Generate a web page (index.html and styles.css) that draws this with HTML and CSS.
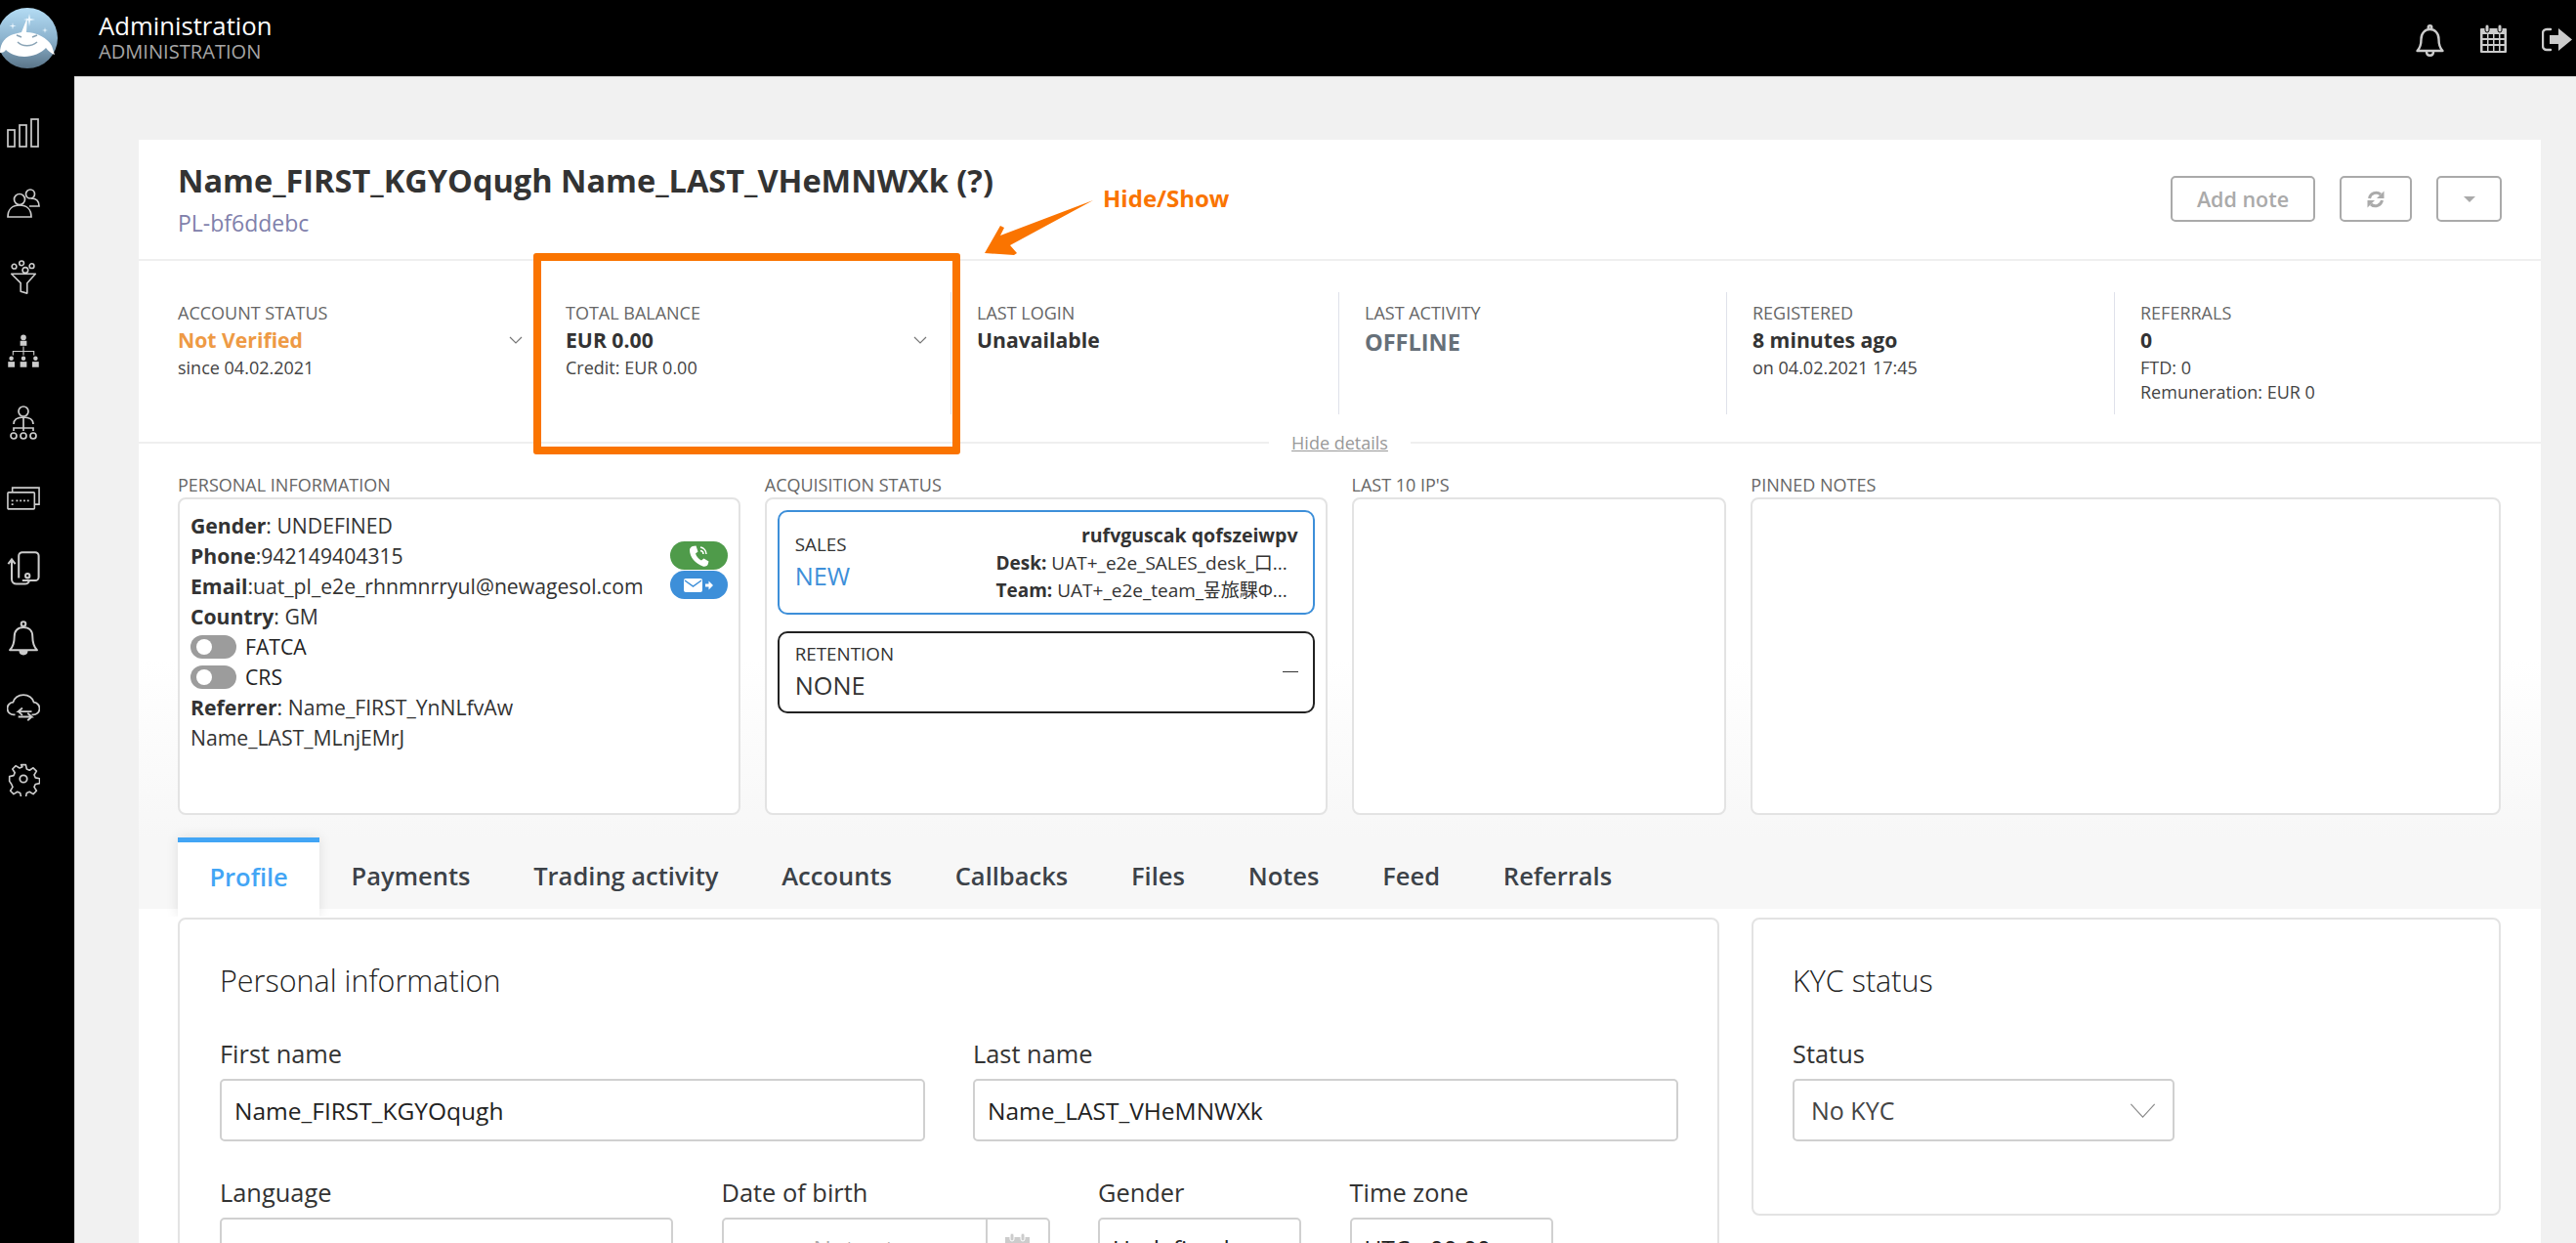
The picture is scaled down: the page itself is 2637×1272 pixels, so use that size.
FILE: index.html
```html
<!DOCTYPE html>
<html lang="en">
<head>
    <meta charset="UTF-8">
    <meta name="viewport" content="width=device-width, initial-scale=1.0">
    <title>Administration</title>
    <link rel="stylesheet" href="styles.css">
</head>
<body>
    <header class="topbar">
        <svg class="logo" viewBox="0 0 62 62">
            <defs>
                <linearGradient id="logoFill" x1="0" y1="0" x2="0" y2="1">
                    <stop offset="0" stop-color="#b4dcf4"/>
                    <stop offset="0.5" stop-color="#8db4cf"/>
                    <stop offset="1" stop-color="#5a7488"/>
                </linearGradient>
            </defs>
            <circle cx="31" cy="31" r="31" fill="url(#logoFill)"/>
            <path d="M3 46c0-10 6-17 14-19l8-2 6-15-1 15c10 0 22 6 26 14l3 9c-3-1-7-4-9-7-4 5-14 9-22 9s-15-3-19-7c-1 2-3 3-6 3z" fill="#fff"/>
            <path d="M21 35c5 5 14 5 20 0M20 28l5 2M36 30l5-2" fill="none" stroke="#8aa4b6" stroke-width="1.5"/>
            <path d="M33 6l1 5 5 1-5 1-1 6-1-6-5-1 5-1zM16 15l.6 3 3 .6-3 .6-.6 3-.6-3-3-.6 3-.6zM49 20l.5 2.500 2.500.5-2.500.5-.5 2.500-.5-2.500-2.500-.5 2.500-.5z" fill="#eef8ff"/>
        </svg>
        <div class="topbar-title">
            <div class="app-name">Administration</div>
            <div class="app-sub">ADMINISTRATION</div>
        </div>
        <div class="topbar-icons">
            <svg class="icon-bell" viewBox="0 0 29 33" fill="none" stroke="#ccc" stroke-width="2.400">
                <path d="M1.500 27c3-3 4-6 4-12 0-6 4-10 9-10s9 4 9 10c0 6 1 9 4 12z" stroke-linejoin="round"/>
                <circle cx="14.500" cy="3" r="1.800"/>
                <path d="M11 28c0 5 7 5 7 0"/>
            </svg>
            <svg class="icon-cal" viewBox="0 0 27 29">
                <path d="M1 4h25a1 1 0 0 1 1 1v23a1 1 0 0 1-1 1H1a1 1 0 0 1-1-1V5a1 1 0 0 1 1-1z" fill="#ccc"/>
                <path d="M2.500 10h4.500v4H2.500zM8.500 10h4.500v4H8.500zM14.500 10h4.500v4h-4.500zM20.500 10h4v4h-4zM2.500 16h4.500v4H2.500zM8.500 16h4.500v4H8.500zM14.500 16h4.500v4h-4.500zM20.500 16h4v4h-4zM2.500 22h4.500v5H2.500zM8.500 22h4.500v5H8.500zM14.500 22h4.500v5h-4.500zM20.500 22h4v5h-4z" fill="#000"/>
                <rect x="5" y="0" width="4" height="8" rx="2" fill="#ccc" stroke="#000"/>
                <rect x="18" y="0" width="4" height="8" rx="2" fill="#ccc" stroke="#000"/>
            </svg>
            <svg class="icon-logout" viewBox="0 0 31 25">
                <path d="M9 2H5a4 4 0 0 0-4 4v13a4 4 0 0 0 4 4h4" fill="none" stroke="#ccc" stroke-width="2.400" stroke-linecap="round"/>
                <path d="M8 8h9V1l14 11.500L17 24v-7H8z" fill="#ccc"/>
            </svg>
        </div>
    </header>

    <div class="main">
        <nav class="sidebar">
            <div class="nav-item">
                <svg viewBox="0 0 34 30"><rect x="1" y="12" width="7" height="17"/><rect x="13" y="7" width="7" height="22"/><rect x="25" y="1" width="7" height="28"/></svg>
            </div>
            <div class="nav-item">
                <svg viewBox="0 0 34 30"><circle cx="13" cy="11" r="5.500"/><path d="M1 29c0-8 5-12 12-12s12 4 12 12z"/><circle cx="24" cy="5.500" r="4.500"/><path d="M23 18h10c0-5-3-8-8-8"/></svg>
            </div>
            <div class="nav-item">
                <svg viewBox="0 0 28 38"><circle cx="4" cy="7" r="2.500"/><circle cx="12" cy="3.500" r="2.500"/><circle cx="23" cy="6.500" r="2.500"/><circle cx="16" cy="11" r="3"/><path d="M1 15h26L18 25v11l-7-2V25z" stroke-linejoin="round"/></svg>
            </div>
            <div class="nav-item">
                <svg viewBox="0 0 30 32" class="solid"><circle cx="15" cy="3" r="2.500"/><rect x="12" y="6" width="6" height="4.500"/><path d="M14.500 11h1v4h9.500v4h-1v-3h-8.500v3h-1v-3H6v3H5v-4h9.500z"/><circle cx="4" cy="22" r="2"/><rect x="1" y="25" width="6" height="5"/><circle cx="15" cy="22" r="2"/><rect x="12" y="25" width="6" height="5"/><circle cx="26" cy="22" r="2"/><rect x="23" y="25" width="6" height="5"/></svg>
            </div>
            <div class="nav-item">
                <svg viewBox="0 0 28 36"><circle cx="14" cy="6" r="5"/><path d="M4 19c0-5 4-7 10-7s10 2 10 7M14 12v14M4 26v-3h20v3"/><circle cx="4" cy="31" r="3"/><circle cx="14" cy="31" r="3"/><circle cx="24" cy="31" r="3"/></svg>
            </div>
            <div class="nav-item">
                <svg viewBox="0 0 36 25"><path d="M6 6V1h29v18h-5"/><rect x="1" y="6" width="29" height="18" rx="1"/><path d="M5 15h2M10 15h2M14 15h2M18 15h2M22 15h2M5 19h2"/></svg>
            </div>
            <div class="nav-item">
                <svg viewBox="0 0 28 30"><path d="M10 23V4a3 3 0 0 1 3-3h11a3 3 0 0 1 3 3v18a3 3 0 0 1-3 3H13"/><circle cx="17.500" cy="21" r="1.800"/><path d="M1 11l3-4 3 4M4 7v17a4 4 0 0 0 4 4h7a4 4 0 0 0 4-3"/></svg>
            </div>
            <div class="nav-item">
                <svg viewBox="0 0 26 31"><path d="M1 26c3-3 4-6 4-12 0-5 3-8 8-8s8 3 8 8c0 6 1 9 4 12z" stroke-linejoin="round"/><circle cx="13" cy="3" r="2"/><path d="M10 27c0 3.500 6 3.500 6 0z" class="fill"/></svg>
            </div>
            <div class="nav-item">
                <svg viewBox="0 0 32 28"><path d="M8 20H7a6 6 0 0 1-1-12C7 4 11 1 16 1s9 3 10 7a6 6 0 0 1-1 12h-1"/><path d="M24 17H11l4-3.500M11 17l4 3.500M11 22h13l-4-3.500M24 22l-4 3.500"/></svg>
            </div>
            <div class="nav-item">
                <svg viewBox="0 0 32 32"><circle cx="16" cy="16" r="3.500"/><path d="M13.500 1h5l1 4.500 3 1.300 4-2.500 3.500 3.500-2.500 4 1.300 3 4.500 1v5l-4.500 1-1.300 3 2.500 4-3.500 3.500-4-2.500-3 1.300-1 4.500h-5l-1-4.500-3-1.300-4 2.500-3.500-3.500 2.500-4-1.300-3L1 18.500v-5l4.500-1 1.300-3-2.500-4 3.500-3.500 4 2.500 3-1.300z" transform="translate(1.600 1.600) scale(.9)" stroke-linejoin="round"/></svg>
            </div>
        </nav>

        <main class="content">
            <div class="card">
                <div class="card-head">
                    <div>
                        <h1 class="client-name">Name_FIRST_KGYOqugh Name_LAST_VHeMNWXk (?)</h1>
                        <div class="client-id">PL-bf6ddebc</div>
                    </div>
                    <div class="head-actions">
                        <button class="btn btn-note">Add note</button>
                        <button class="btn btn-refresh">
                            <svg viewBox="0 0 20 20" width="20" height="20" fill="#aaa"><path d="M3.500 9A7 7 0 0 1 15 5" fill="none" stroke="#aaa" stroke-width="3"/><path d="M18.500 1.500V9H11z"/><path d="M16.500 11A7 7 0 0 1 5 15" fill="none" stroke="#aaa" stroke-width="3"/><path d="M1.500 18.500V11H9z"/></svg>
                        </button>
                        <button class="btn btn-caret"><span class="caret"></span></button>
                    </div>
                </div>

                <div class="stats">
                    <div class="stat stat-first">
                        <div class="stat-label">ACCOUNT STATUS</div>
                        <div class="stat-value stat-row"><span class="text-orange">Not Verified</span><svg class="chev" viewBox="0 0 14 8"><path d="M1 1l6 6 6-6"/></svg></div>
                        <div class="stat-sub">since 04.02.2021</div>
                    </div>
                    <div class="stat">
                        <div class="stat-label">TOTAL BALANCE</div>
                        <div class="stat-value stat-row"><span>EUR 0.00</span><svg class="chev" viewBox="0 0 14 8"><path d="M1 1l6 6 6-6"/></svg></div>
                        <div class="stat-sub">Credit: EUR 0.00</div>
                    </div>
                    <div class="stat">
                        <div class="stat-label">LAST LOGIN</div>
                        <div class="stat-value">Unavailable</div>
                    </div>
                    <div class="stat">
                        <div class="stat-label">LAST ACTIVITY</div>
                        <div class="stat-value text-offline">OFFLINE</div>
                    </div>
                    <div class="stat">
                        <div class="stat-label">REGISTERED</div>
                        <div class="stat-value">8 minutes ago</div>
                        <div class="stat-sub">on 04.02.2021 17:45</div>
                    </div>
                    <div class="stat">
                        <div class="stat-label">REFERRALS</div>
                        <div class="stat-value">0</div>
                        <div class="stat-sub">FTD: 0</div>
                        <div class="stat-sub">Remuneration: EUR 0</div>
                    </div>
                </div>

                <div class="hide-line"><a class="hide-link">Hide details</a></div>

                <div class="details">
                    <div>
                        <div class="box-label">PERSONAL INFORMATION</div>
                        <div class="box box-personal">
                            <div class="info-line"><b>Gender</b>: UNDEFINED</div>
                            <div class="info-line"><b>Phone</b>:942149404315</div>
                            <div class="info-line"><b>Email</b>:uat_pl_e2e_rhnmnrryul@newagesol.com</div>
                            <div class="info-line"><b>Country</b>: GM</div>
                            <div class="info-line toggle-line"><span class="toggle"></span>FATCA</div>
                            <div class="info-line toggle-line"><span class="toggle"></span>CRS</div>
                            <div class="info-line"><b>Referrer</b>: Name_FIRST_YnNLfvAw Name_LAST_MLnjEMrJ</div>
                            <div class="contact-btns">
                                <span class="pill pill-green">
                                    <svg viewBox="0 0 24 24" width="24" height="24"><path d="M6 2l3.500-.5 2 6-2.500 2c1 3 3 5.500 6 7l2.500-2 5 3-1 3.500c-1 1.500-3 2-5 1.500C9 20 3 13 3 6c0-2 1.500-3.500 3-4z" fill="#fff"/><path d="M14 3a7 7 0 0 1 6 7M14 6.500a3.500 3.500 0 0 1 3 3.500" stroke="#fff" stroke-width="1.500" fill="none"/></svg>
                                </span>
                                <span class="pill pill-blue">
                                    <svg viewBox="0 0 32 18" width="32" height="18"><rect x="1" y="2" width="19" height="14" rx="2" fill="#fff"/><path d="M2 4l8.500 6L19 4" stroke="#3d8fd9" stroke-width="1.500" fill="none"/><path d="M23 7.500h3.500V4.500L31 9l-4.500 4.500v-3H23z" fill="#fff"/></svg>
                                </span>
                            </div>
                        </div>
                    </div>
                    <div>
                        <div class="box-label">ACQUISITION STATUS</div>
                        <div class="box box-acq">
                            <div class="acq acq-sales">
                                <div class="acq-left">
                                    <div class="acq-title">SALES</div>
                                    <div class="acq-status text-blue">NEW</div>
                                </div>
                                <div class="acq-right">
                                    <div class="acq-owner">rufvguscak qofszeiwpv</div>
                                    <div class="acq-meta"><b>Desk:</b> UAT+_e2e_SALES_desk_口...</div>
                                    <div class="acq-meta"><b>Team:</b> UAT+_e2e_team_뫂旅騍Φ...</div>
                                </div>
                            </div>
                            <div class="acq acq-retention">
                                <div class="acq-left">
                                    <div class="acq-title">RETENTION</div>
                                    <div class="acq-status">NONE</div>
                                </div>
                                <div class="acq-dash"></div>
                            </div>
                        </div>
                    </div>
                    <div>
                        <div class="box-label">LAST 10 IP'S</div>
                        <div class="box"></div>
                    </div>
                    <div>
                        <div class="box-label">PINNED NOTES</div>
                        <div class="box"></div>
                    </div>
                </div>

                <div class="tabs">
                    <a class="tab active">Profile</a>
                    <a class="tab">Payments</a>
                    <a class="tab">Trading activity</a>
                    <a class="tab">Accounts</a>
                    <a class="tab">Callbacks</a>
                    <a class="tab">Files</a>
                    <a class="tab">Notes</a>
                    <a class="tab">Feed</a>
                    <a class="tab">Referrals</a>
                </div>

                <div class="tab-body">
                    <section class="panel">
                        <h2 class="panel-title">Personal information</h2>
                        <div class="form-row form-row-names">
                            <div>
                                <label class="field-label">First name</label>
                                <input class="field" type="text" value="Name_FIRST_KGYOqugh">
                            </div>
                            <div>
                                <label class="field-label">Last name</label>
                                <input class="field" type="text" value="Name_LAST_VHeMNWXk">
                            </div>
                        </div>
                        <div class="form-row form-row-more">
                            <div>
                                <label class="field-label">Language</label>
                                <div class="field"></div>
                            </div>
                            <div>
                                <label class="field-label">Date of birth</label>
                                <div class="field field-date">
                                    <span class="date-text">Not set</span>
                                    <span class="date-addon">
                                        <svg viewBox="0 0 27 29" width="27" height="29"><path d="M1 4h25v24H1z" fill="#ccc"/><rect x="6" y="0" width="4" height="8" rx="2" fill="#ccc" stroke="#fff"/><rect x="17" y="0" width="4" height="8" rx="2" fill="#ccc" stroke="#fff"/></svg>
                                    </span>
                                </div>
                            </div>
                            <div>
                                <label class="field-label">Gender</label>
                                <div class="field">Undefined</div>
                            </div>
                            <div>
                                <label class="field-label">Time zone</label>
                                <div class="field">UTC +00:00</div>
                            </div>
                        </div>
                    </section>
                    <section class="panel panel-kyc">
                        <h2 class="panel-title">KYC status</h2>
                        <div class="form-row">
                            <div>
                                <label class="field-label">Status</label>
                                <div class="field field-select">
                                    <span>No KYC</span>
                                    <svg class="select-chev" viewBox="0 0 28 16"><path d="M1 1l13 14L27 1"/></svg>
                                </div>
                            </div>
                        </div>
                    </section>
                </div>

                <!-- annotation drawn over the screenshot -->
                <div class="note-box"></div>
                <svg class="note-arrow" viewBox="0 0 116 58">
                    <path d="M114 2L19 38l4-8-4-2-16 28 30 2 3-2-7-8z" fill="#fa7400"/>
                </svg>
                <div class="note-text">Hide/Show</div>
            </div>
        </main>
    </div>
</body>
</html>
```

FILE: styles.css
```css
html, body {
    margin: 0;
    padding: 0;
    height: 100%;
    overflow: hidden;
}

body {
    font-family: "Open Sans", Arial, sans-serif;
    color: #333;
    display: flex;
    flex-direction: column;
    background: #f1f1f1;
}

/* top bar */
.topbar {
    flex: none;
    height: 78px;
    background: #000;
    display: flex;
    align-items: center;
    position: relative;
}

.logo {
    position: absolute;
    left: -3px;
    top: 8px;
    width: 62px;
    height: 62px;
}

.topbar-title {
    margin-left: 101px;
    margin-top: 1px;
}

.app-name {
    color: #fff;
    font-size: 25.700px;
    line-height: 26px;
}

.app-sub {
    color: #a6a6a6;
    font-size: 20.100px;
    line-height: 25px;
}

.topbar-icons {
    margin-left: auto;
    display: flex;
    align-items: center;
    padding-right: 4px;
}

.icon-bell {
    width: 29px;
    height: 33px;
    margin-right: 37px;
    margin-top: 4px;
}

.icon-cal {
    width: 27px;
    height: 29px;
    margin-right: 36px;
}

.icon-logout {
    width: 31px;
    height: 25px;
    margin-top: 2px;
}

/* layout */
.main {
    flex: 1;
    display: flex;
    min-height: 0;
}

.sidebar {
    flex: none;
    width: 76px;
    background: #000;
    border-right: 1px solid #ddd;
    padding-top: 22px;
}

.nav-item {
    height: 72px;
    width: 47px;
    display: flex;
    align-items: center;
    justify-content: center;
}

/* the icons are not evenly spaced */
.nav-item:nth-child(3),
.nav-item:nth-child(4) {
    margin-top: 4px;
}

.nav-item:nth-child(5) {
    margin-top: 1px;
}

.nav-item:nth-child(6) {
    margin-top: 5px;
}

.nav-item:nth-child(8) {
    margin-top: -1px;
}

.nav-item svg {
    width: 34px;
    height: 36px;
    fill: none;
    stroke: #ccc;
    stroke-width: 1.700;
}

.nav-item svg.solid {
    fill: #ccc;
    stroke: none;
}

.nav-item svg .fill {
    fill: #ccc;
}

.content {
    flex: 1;
    min-width: 0;
    box-sizing: border-box;
    padding: 64px 36px 0 65px;
    border-top: 1px solid #ddd;
    display: flex;
    flex-direction: column;
}

.card {
    background: #fff;
    flex: 1;
    min-height: 0;
    position: relative;
}

/* header of card */
.card-head {
    height: 122px;
    padding: 0 40px;
    display: flex;
    justify-content: space-between;
    border-bottom: 2px solid #efefef;
}

.client-name {
    margin: 22px 0 0;
    font-size: 32.500px;
    line-height: 40px;
    font-weight: 700;
}

.client-id {
    color: #8080ab;
    font-size: 23px;
    line-height: 30px;
    margin-top: 8px;
}

.head-actions {
    display: flex;
    gap: 25px;
    padding-top: 37px;
}

.btn {
    height: 47px;
    background: #fff;
    border: 2px solid #aaa;
    border-radius: 5px;
    color: #aaa;
    font-family: inherit;
    font-size: 21.500px;
    font-weight: 600;
    padding: 0;
    display: flex;
    align-items: center;
    justify-content: center;
}

.btn-note {
    width: 148px;
}

.btn-refresh {
    width: 74px;
}

.btn-caret {
    width: 67px;
}

.caret {
    width: 0;
    height: 0;
    border-left: 6px solid transparent;
    border-right: 6px solid transparent;
    border-top: 6px solid #aaa;
}

/* stats row */
.stats {
    display: grid;
    grid-template-columns: 370px 421px 397px 397px 397px 1fr;
    padding: 32px 0 28px 40px;
}

.stat {
    height: 125px;
    box-sizing: border-box;
    border-left: 1px solid #dfe1ea;
    padding: 9px 24px 0 26px;
}

.stat-first {
    border-left: none;
    padding-left: 0;
    padding-right: 17px;
}

.stat-label {
    font-size: 18px;
    line-height: 24px;
    color: #666;
}

.stat-value {
    font-size: 21.200px;
    line-height: 32px;
    font-weight: 700;
    color: #333;
}

.stat-row {
    display: flex;
    justify-content: space-between;
    align-items: center;
}

.stat-sub {
    font-size: 18px;
    line-height: 25px;
    color: #444;
}

.text-orange {
    color: #ee9a45;
}

.text-offline {
    color: #667079;
    font-size: 23.500px;
    line-height: 36px;
}

.chev {
    width: 14px;
    height: 8px;
    fill: none;
    stroke: #777;
    stroke-width: 1.200;
}

.hide-line {
    height: 2px;
    background: #efefef;
    display: flex;
    align-items: center;
    justify-content: center;
}

.hide-link {
    background: #fff;
    padding: 0 23px;
    font-size: 18px;
    color: #999;
    text-decoration: underline;
}

/* info boxes */
.details {
    display: grid;
    grid-template-columns: 3fr 3fr 2fr 4fr;
    gap: 25px;
    padding: 31px 41px 23px 40px;
    background: linear-gradient(#fff 55%, #f7f7f7);
}

.box-label {
    font-size: 18px;
    line-height: 22px;
    color: #666;
    margin-bottom: 2px;
}

.box {
    height: 325px;
    box-sizing: border-box;
    background: #fff;
    border: 2px solid #e3e3e3;
    border-radius: 8px;
}

.box-personal {
    position: relative;
    padding: 11px 11px;
}

.info-line {
    font-size: 21.200px;
    line-height: 31px;
    color: #333;
}

.info-line b {
    font-weight: 700;
}

.toggle-line {
    display: flex;
    align-items: center;
    color: #222;
}

.toggle {
    width: 47px;
    height: 24px;
    border-radius: 12px;
    background: #9c9c9c;
    margin-right: 9px;
    position: relative;
}

.toggle::after {
    content: "";
    position: absolute;
    left: 6px;
    top: 4px;
    width: 16px;
    height: 16px;
    border-radius: 50%;
    background: #fff;
}

.contact-btns {
    position: absolute;
    right: 11px;
    top: 43px;
    display: flex;
    flex-direction: column;
    gap: 1px;
}

.pill {
    width: 59px;
    height: 29px;
    border-radius: 15px;
    display: flex;
    align-items: center;
    justify-content: center;
}

.pill-green {
    background: #4f9b4a;
}

.pill-blue {
    background: #3d8fd9;
}

.box-acq {
    padding: 11px 11px;
}

.acq {
    box-sizing: border-box;
    border-radius: 10px;
    border: 2px solid #222;
    padding: 0 15px 0 16px;
    display: flex;
    justify-content: space-between;
    align-items: center;
}

.acq-sales {
    height: 107px;
    border-color: #3d8fd9;
}

.acq-retention {
    height: 84px;
    margin-top: 17px;
}

.acq-title {
    font-size: 18.800px;
    line-height: 26px;
    color: #333;
}

.acq-status {
    font-size: 25.300px;
    line-height: 38px;
    color: #333;
}

.acq-status.text-blue {
    color: #3d8fd9;
}

.acq-right {
    width: 309px;
}

.acq-owner {
    font-size: 19.500px;
    font-weight: 700;
    line-height: 28px;
    text-align: right;
}

.acq-meta {
    font-size: 19px;
    line-height: 28px;
    white-space: nowrap;
    font-family: "Open Sans", "Noto Sans CJK KR", sans-serif;
}

.acq-dash {
    width: 16px;
    height: 1px;
    background: #333;
    margin-top: -2px;
}

/* tabs */
.tabs {
    height: 73px;
    background: #f7f7f7;
    padding-left: 40px;
    display: flex;
}

.tab {
    padding: 0 32.400px;
    font-size: 25.500px;
    font-weight: 600;
    line-height: 78px;
    color: #3c4248;
}

.tab.active {
    background: #fff;
    color: #42a5f5;
    border-top: 5px solid #42a5f5;
    height: 76px;
    line-height: 70px;
    position: relative;
    box-shadow: 0 0 12px rgba(0, 0, 0, 0.1);
    clip-path: inset(-12px -12px 0 -12px);
}

/* forms */
.tab-body {
    display: grid;
    grid-template-columns: 1578px 767px;
    column-gap: 33px;
    align-items: start;
    padding: 9px 41px 0 40px;
    position: relative;
}

.panel {
    box-sizing: border-box;
    border: 2px solid #e3e3e3;
    border-radius: 8px;
    padding: 44px 40px 200px 41px;
    background: #fff;
}

.panel-kyc {
    padding-bottom: 74px;
    padding-left: 40px;
}

.panel-title {
    margin: 0;
    font-size: 30.500px;
    line-height: 36px;
    font-weight: 300;
    color: #222;
}

.form-row {
    display: grid;
    gap: 50px;
    margin-bottom: 37px;
}

.form-row-names {
    grid-template-columns: 722px 722px;
    column-gap: 49px;
    margin-top: 42px;
}

.form-row-more {
    grid-template-columns: 464px 336px 208px 208px;
    column-gap: 49.500px;
}

.panel-kyc .form-row {
    grid-template-columns: 391px;
    margin-top: 42px;
    margin-bottom: 0;
}

.field-label {
    display: block;
    font-size: 25.400px;
    line-height: 30px;
    margin-bottom: 11px;
    color: #333;
}

.field {
    display: block;
    width: 100%;
    height: 64px;
    box-sizing: border-box;
    border: 2px solid #d0d0d0;
    border-radius: 5px;
    background: #fff;
    padding: 0 13px;
    font-family: inherit;
    font-size: 24.500px;
    line-height: 60px;
    color: #222;
}

.field-date {
    display: flex;
    justify-content: space-between;
    padding: 0;
}

.date-text {
    margin-left: 92px;
    color: #aaa;
}

.date-addon {
    width: 62px;
    border-left: 2px solid #d0d0d0;
    display: flex;
    justify-content: center;
    padding-top: 14px;
}

.field-select {
    display: flex;
    align-items: center;
    justify-content: space-between;
    padding: 0 17px;
    font-size: 25px;
    color: #444;
}

.select-chev {
    width: 27px;
    height: 15px;
    fill: none;
    stroke: #888;
    stroke-width: 1.200;
}

/* annotation */
.note-box {
    position: absolute;
    left: 404px;
    top: 116px;
    width: 437px;
    height: 206px;
    box-sizing: border-box;
    border: 8px solid #fa7400;
    border-radius: 3px;
}

.note-arrow {
    position: absolute;
    left: 863px;
    top: 60px;
    width: 116px;
    height: 58px;
}

.note-text {
    position: absolute;
    left: 987px;
    top: 44px;
    font-size: 24px;
    line-height: 32px;
    font-weight: 700;
    color: #fa7400;
}
```
